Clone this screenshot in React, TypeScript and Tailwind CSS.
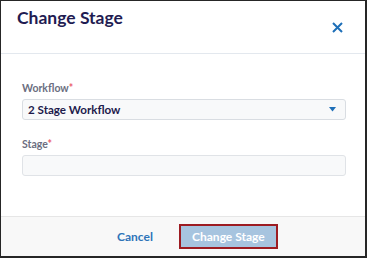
import React from 'react';

const font = { fontFamily: 'Lato, "Open Sans", sans-serif' };

const Label: React.FC<{ text: string }> = ({ text }) => (
  <div className="text-[10.5px] font-bold leading-[14px] text-[#6b6e80]">
    {text}
    <span className="text-[#ea5a6c]">*</span>
  </div>
);

const App: React.FC = () => {
  return (
    <div
      className="w-[367px] h-[258px] bg-white border-t border-l border-r-2 border-b-2 border-[#262626] flex flex-col"
      style={font}
    >
      {/* Header */}
      <div className="h-[53px] flex justify-between border-b border-[#e3e8ee] pl-[16px] pr-[22px]">
        <h2 className="pt-[5.5px] text-[17.5px] leading-[22px] font-bold text-[#1f1c52]">Change Stage</h2>
        <button className="self-center text-[#1e6fb8] mt-[1px]" aria-label="Close">
          <svg width="11" height="11" viewBox="0 0 11 11">
            <path d="M1 1 L10 10 M10 1 L1 10" stroke="currentColor" strokeWidth="2" />
          </svg>
        </button>
      </div>

      {/* Body */}
      <div className="h-[162px] pl-[21px] pr-[19px] pt-[27px]">
        <Label text="Workflow" />
        <div className="mt-[4px] h-[21px] rounded-[3px] border border-[#d9dde2] bg-[#f8f9fa] flex items-center justify-between pl-[5px] pr-[9px]">
          <span className="text-[11.6px] font-bold text-[#1d1b4c]">2 Stage Workflow</span>
          <svg width="7" height="5" viewBox="0 0 7 5">
            <path d="M0 0 H7 L3.5 4.5 Z" fill="#1e6fb8" />
          </svg>
        </div>
        <div className="mt-[17px]">
          <Label text="Stage" />
        </div>
        <div className="mt-[4px] h-[21px] rounded-[3px] border border-[#e0e3e7] bg-[#f8f9fa]" />
      </div>

      {/* Footer */}
      <div className="flex-1 border-t border-[#e6e6e6] bg-[#f8f8f8] flex items-center pl-[116px] gap-[26px]">
        <button className="text-[12px] font-bold text-[#2e74b8]">Cancel</button>
        <button className="w-[99px] h-[25px] border-2 border-[#9d1c22] bg-[#a7c4df] text-[12px] font-bold text-white">
          Change Stage
        </button>
      </div>
    </div>
  );
};

export default App;
